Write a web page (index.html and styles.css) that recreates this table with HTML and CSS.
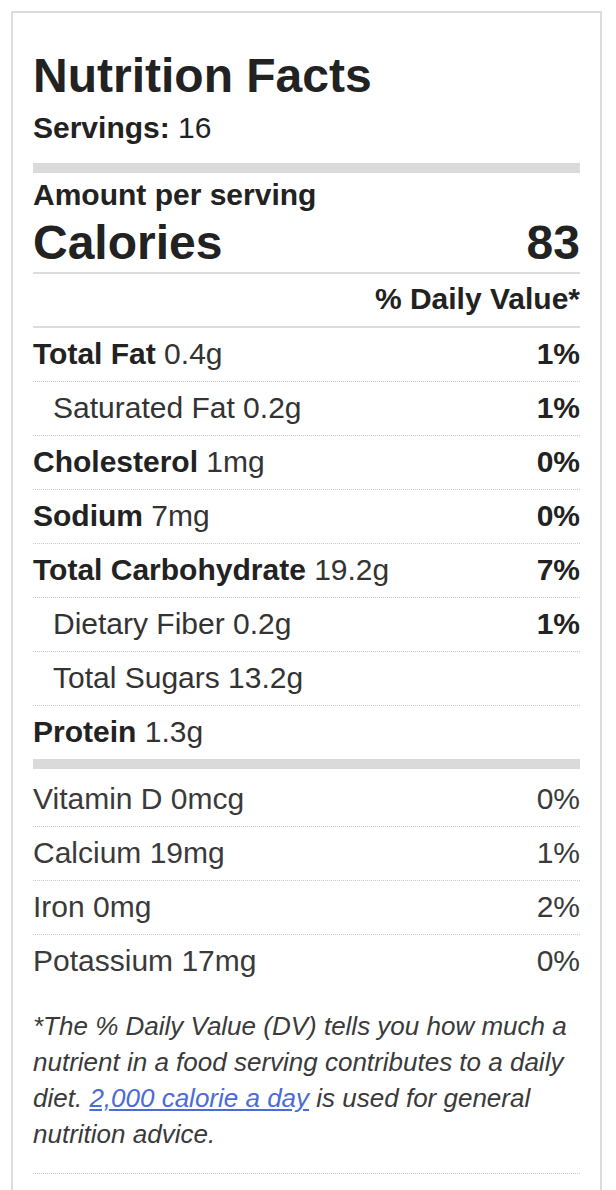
FILE: index.html
```html
<!DOCTYPE html>
<html lang="en">
<head>
<meta charset="utf-8">
<title>Nutrition Facts</title>
<link rel="stylesheet" href="styles.css">
</head>
<body>
<div class="label">
  <h2 class="title">Nutrition Facts</h2>
  <div class="servings"><b>Servings:</b> 16</div>
  <div class="bar bar-top"></div>
  <div class="amount">Amount per serving</div>
  <div class="calories"><span>Calories</span><span>83</span></div>
  <div class="dv-head">% Daily Value*</div>

  <div class="row"><span><b>Total Fat</b> 0.4g</span><b>1%</b></div>
  <div class="row indent"><span>Saturated Fat 0.2g</span><b>1%</b></div>
  <div class="row"><span><b>Cholesterol</b> 1mg</span><b>0%</b></div>
  <div class="row"><span><b>Sodium</b> 7mg</span><b>0%</b></div>
  <div class="row"><span><b>Total Carbohydrate</b> 19.2g</span><b>7%</b></div>
  <div class="row indent"><span>Dietary Fiber 0.2g</span><b>1%</b></div>
  <div class="row indent"><span>Total Sugars 13.2g</span></div>
  <div class="row no-line"><span><b>Protein</b> 1.3g</span></div>

  <div class="bar bar-mid"></div>

  <div class="row minor"><span>Vitamin D 0mcg</span><span>0%</span></div>
  <div class="row minor"><span>Calcium 19mg</span><span>1%</span></div>
  <div class="row minor"><span>Iron 0mg</span><span>2%</span></div>
  <div class="row minor no-line"><span>Potassium 17mg</span><span>0%</span></div>

  <p class="footnote">*The % Daily Value (DV) tells you how much a nutrient in a food serving contributes to a daily diet. <a href="#">2,000 calorie a day</a> is used for general nutrition advice.</p>
  <div class="foot-sep"></div>
</div>
</body>
</html>
```

FILE: styles.css
```css
* {
  box-sizing: border-box;
  margin: 0;
  padding: 0;
}

body {
  margin: 0;
  background: #fff;
  font-family: "Liberation Sans", Arial, Helvetica, sans-serif;
  color: #333;
}

.label {
  margin: 11px 0 0 11px;
  width: 591px;
  border: 2px solid #dcdcdc;
  padding: 37px 20px 40px;
}

.title {
  font-size: 48px;
  line-height: 52px;
  font-weight: 700;
  color: #222;
}

.servings {
  margin-top: 8px;
  font-size: 30px;
  line-height: 36px;
  color: #222;
}

.bar {
  height: 10px;
  background: #dadada;
}

.bar-top {
  margin-top: 17px;
}

.bar-mid {
  margin-bottom: 4px;
}

.amount {
  margin-top: 4px;
  font-size: 30px;
  line-height: 36px;
  font-weight: 700;
  color: #222;
}

.calories {
  margin-top: 4px;
  display: flex;
  justify-content: space-between;
  font-size: 48px;
  line-height: 52px;
  font-weight: 700;
  color: #222;
  padding-bottom: 3px;
  border-bottom: 2px solid #dcdcdc;
}

.dv-head {
  text-align: right;
  font-size: 30px;
  line-height: 36px;
  font-weight: 700;
  color: #222;
  padding: 7px 0 9px;
  border-bottom: 2px solid #dcdcdc;
}

.row {
  display: flex;
  justify-content: space-between;
  font-size: 30px;
  line-height: 36px;
  padding: 8px 0 9px;
  border-bottom: 1px dotted #c8c8c8;
  color: #333;
}

.row b {
  color: #222;
}

.row.indent {
  padding-left: 20px;
}

.row.no-line {
  border-bottom: none;
}

.row.minor {
  color: #3a3a3a;
}

.footnote {
  margin-top: 20px;
  font-size: 26px;
  line-height: 36px;
  font-style: italic;
  color: #3a3a3a;
}

.footnote a {
  color: #4a6cd4;
  text-decoration: underline;
}

.foot-sep {
  margin-top: 21px;
  border-top: 1px dotted #c8c8c8;
}
```
